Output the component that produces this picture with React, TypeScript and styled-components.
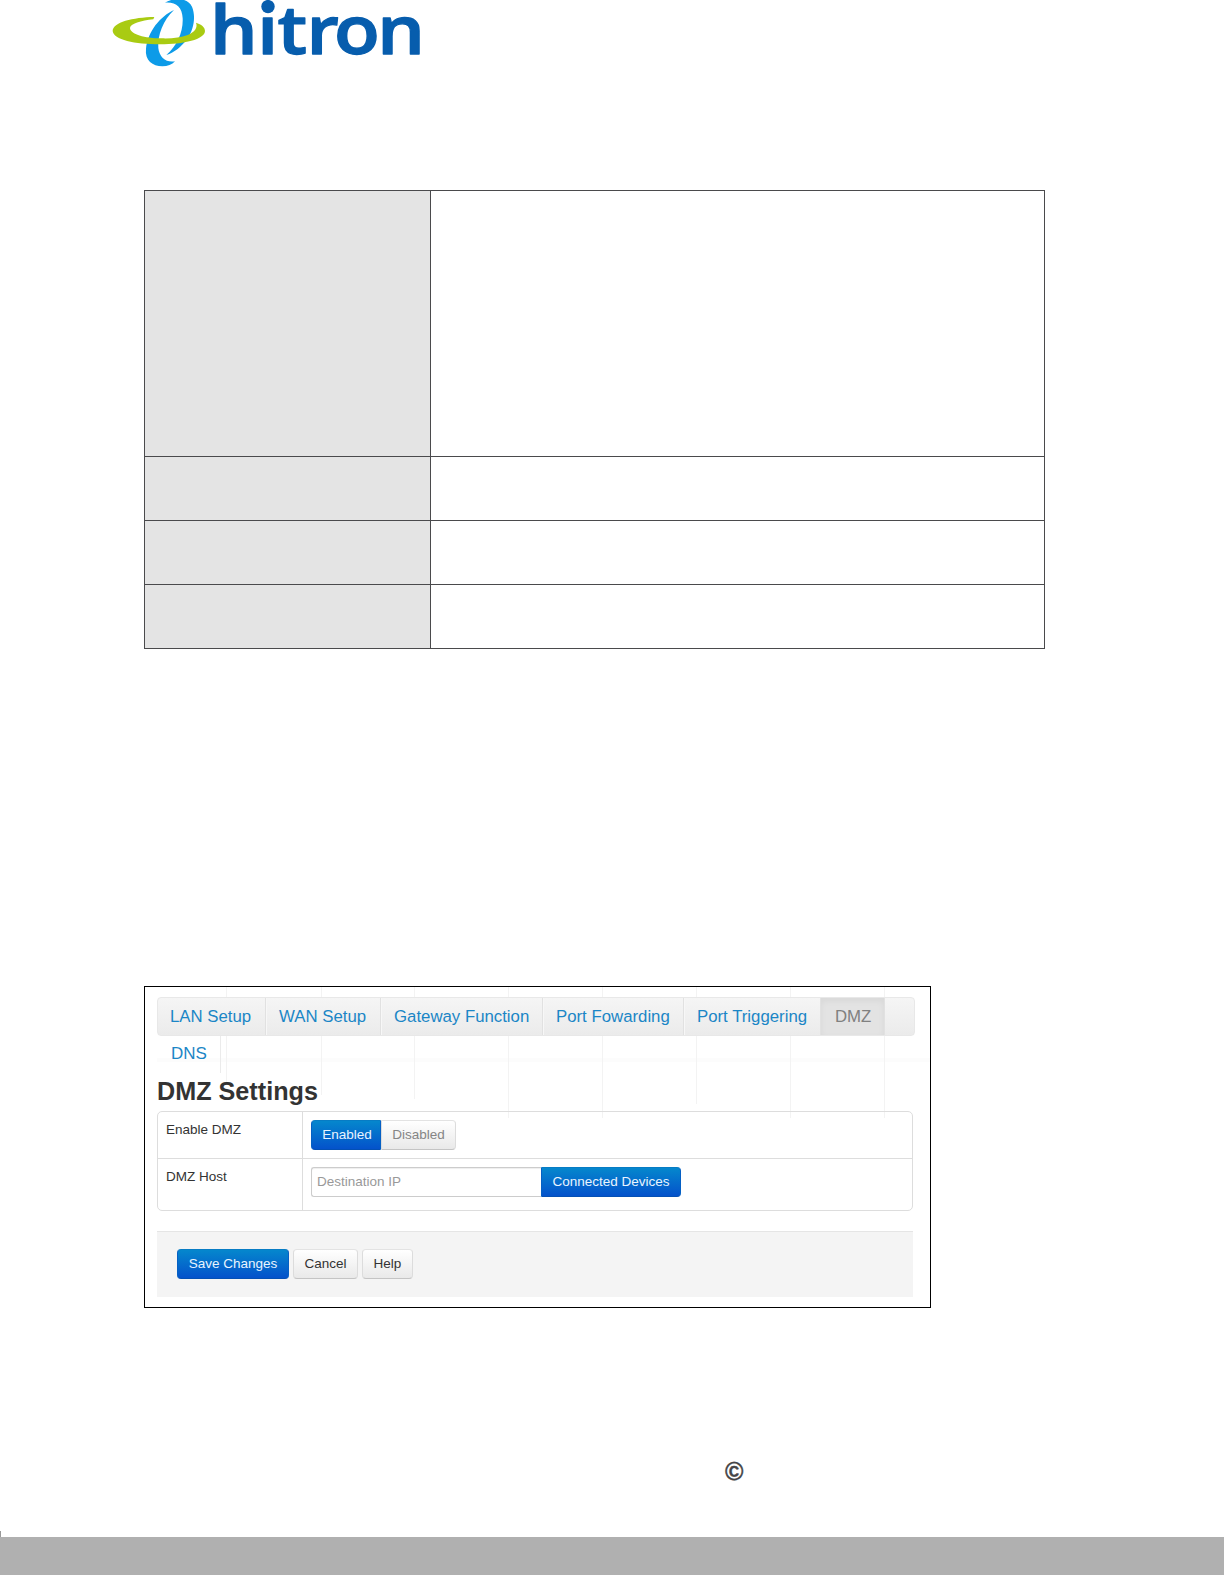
import React from "react";
import styled, { createGlobalStyle, css } from "styled-components";

const GlobalStyle = createGlobalStyle`
  body {
    margin: 0;
    background: #fff;
    font-family: "Liberation Sans", Arial, sans-serif;
  }
  * { box-sizing: border-box; }
`;

const Page = styled.div`
  display: flex;
  flex-direction: column;
  width: 1224px;
  height: 1584px;
  overflow: hidden;
  background: #fff;
`;

const Header = styled.header`
  height: 80px;
  padding-left: 100px;
`;

const LogoSvg = styled.svg`
  display: block;
  overflow: visible;
`;

const SpecTable = styled.div`
  display: grid;
  grid-template-columns: 285px 613px;
  grid-template-rows: 265px 63px 63px 63px;
  gap: 1px;
  width: 901px;
  margin: 110px 0 0 144px;
  padding: 1px;
  background: #4a4a4c;
`;

const SpecCell = styled.div<{ $shaded?: boolean }>`
  background: ${(p) => (p.$shaded ? "#e4e4e4" : "#fff")};
`;

const Panel = styled.section`
  display: flex;
  flex-direction: column;
  width: 787px;
  height: 322px;
  margin: 337px 0 0 144px;
  padding: 10px 15px 0 12px;
  border: 1px solid #000;
  background-color: #fff;
  background-image: ${[81, 176, 269, 363, 457, 551, 645, 739].map(() => "linear-gradient(#f3f3f3, #f3f3f3)").join(", ")},
    linear-gradient(#fcfcfc, #fcfcfc);
  background-size: 1px 98px, 1px 108px, 1px 112px, 1px 131px, 1px 131px, 1px 117px, 1px 131px, 1px 131px, 773px 4px;
  background-position: 81px 0, 176px 0, 269px 0, 363px 0, 457px 0, 551px 0, 645px 0, 739px 0, 12px 71px;
  background-repeat: no-repeat;
`;

const TabBar = styled.nav`
  display: flex;
  flex: none;
  width: 758px;
  height: 39px;
  border: 1px solid #e8e8e8;
  border-radius: 4px;
  background: linear-gradient(#f5f5f5, #ebebeb);
`;

const tabText = css`
  color: #1b86c6;
  font-size: 16.8px;
  line-height: 37px;
  white-space: nowrap;
`;

const Tab = styled.a<{ $width: number; $active?: boolean }>`
  ${tabText}
  width: ${(p) => p.$width}px;
  padding-left: 13px;
  border-right: 1px solid #e1e1e1;
  box-shadow: 1px 0 0 #f7f7f7;
  &:first-child {
    padding-left: 12px;
  }
  ${(p) =>
    p.$active &&
    css`
      color: #808080;
      background: #e3e3e3;
      padding-left: 14px;
      box-shadow: inset 0 3px 6px rgba(0, 0, 0, 0.05);
    `}
`;

const WrappedTab = styled.a`
  ${tabText}
  flex: none;
  width: 64px;
  height: 37px;
  padding-left: 14px;
  border-right: 1px solid #ebebeb;
  font-size: 17px;
  line-height: 36px;
`;

const Title = styled.h1`
  flex: none;
  margin: 0;
  height: 38px;
  color: #333;
  font-size: 25.2px;
  line-height: 36px;
`;

const Settings = styled.div`
  flex: none;
  width: 756px;
  border: 1px solid #ddd;
  border-radius: 5px;
`;

const SettingRow = styled.div<{ $height: number }>`
  display: grid;
  grid-template-columns: 144px 1fr;
  height: ${(p) => p.$height}px;
  & + & {
    border-top: 1px solid #ddd;
  }
`;

const SettingLabel = styled.div`
  padding: 9px 0 0 8px;
  color: #333;
  font-size: 13.5px;
  line-height: 18px;
`;

const SettingControl = styled.div`
  display: flex;
  align-items: flex-start;
  padding: 8px 0 0 8px;
  border-left: 1px solid #ddd;
`;

const Button = styled.button<{ $width: number; $primary?: boolean; $muted?: boolean; $join?: "left" | "right" }>`
  width: ${(p) => p.$width}px;
  height: 30px;
  padding: 0;
  border: 1px solid #d4d4d4;
  border-color: #e3e3e3 #dcdcdc #c4c4c4;
  border-radius: 4px;
  background: linear-gradient(#fff, #e9e9e9);
  color: ${(p) => (p.$muted ? "#858585" : "#333")};
  font: 13.5px/28px "Liberation Sans", Arial, sans-serif;
  white-space: nowrap;
  ${(p) =>
    p.$primary &&
    css`
      border-color: #077cc4 #0560c4 #0450b4;
      background: linear-gradient(#0587cd, #0452cb);
      color: #e9f4ff;
    `}
  ${(p) => p.$join === "left" && "padding-left: 2px; border-top-right-radius: 0; border-bottom-right-radius: 0;"}
  ${(p) => p.$join === "right" && "border-top-left-radius: 0; border-bottom-left-radius: 0;"}
`;

const HostInput = styled.input`
  width: 230px;
  height: 30px;
  padding: 0 5px 2px;
  border: 1px solid #ccc;
  border-right: 0;
  border-radius: 3px 0 0 3px;
  background: #fff;
  box-shadow: inset 0 1px 1px rgba(0, 0, 0, 0.07);
  font: 13.5px "Liberation Sans", Arial, sans-serif;
  &::placeholder {
    color: #999;
    opacity: 1;
  }
`;

const Actions = styled.div`
  display: flex;
  flex: none;
  gap: 4px;
  width: 756px;
  height: 66px;
  margin-top: 20px;
  padding: 17px 0 0 20px;
  border-top: 1px solid #e5e5e5;
  background: #f4f4f4;
`;

const Copyright = styled.div`
  margin: 149px 0 0 725px;
  height: 28px;
  color: #454547;
  font-size: 25px;
  font-weight: 700;
  line-height: 28px;
  -webkit-text-stroke: 0.4px #454547;
`;

const FooterTick = styled.div`
  width: 1px;
  height: 6px;
  margin-top: 46px;
  background: #999;
`;

const FooterBar = styled.footer`
  height: 38px;
  background: #b0b0b0;
`;

const tabs = [
  { label: "LAN Setup", width: 108 },
  { label: "WAN Setup", width: 115 },
  { label: "Gateway Function", width: 162 },
  { label: "Port Fowarding", width: 141 },
  { label: "Port Triggering", width: 137 },
  { label: "DMZ", width: 64, active: true },
];

function Logo() {
  return (
    <LogoSvg width="340" height="80" viewBox="0 0 340 80" aria-label="hitron">
      <g transform="scale(.3333)">
        <path
          fill="#0d9be8"
          d="M194 8C222-8 262-8 276 20C288 48 282 88 262 116C244 140 224 157 199 165C232 137 250 95 248 55C247 22 228 5 194 8Z"
        />
        <path
          fill="#0d9be8"
          d="M222 30C182 48 143 94 138 147C134 181 158 199 187 199C203 199 216 194 225 184C199 189 178 172 175 144C172 106 190 60 222 30Z"
        />
        <path
          fill="#a9cb12"
          d="M163 51C99 52 38 67 38 93C40 119 105 133 180 133C251 133 315 118 315 93C315 81 304 73 288 68C294 83 284 96 263 105C243 113 215 116 185 115C134 115 91 103 90 84C90 72 124 62 160 58Z"
        />
      </g>
      <text
        y="53.6"
        transform="scale(1.12 1)"
        fill="#075dad"
        stroke="#075dad"
        strokeWidth="1.3"
        strokeLinejoin="round"
        fontFamily="'Open Sans', sans-serif"
        fontWeight="600"
        fontSize="67"
      >
        <tspan x="98.3">h</tspan>
        <tspan x="140.4">i</tspan>
        <tspan x="158.4">t</tspan>
        <tspan x="184.4">r</tspan>
        <tspan x="208.9">o</tspan>
        <tspan x="247.6">n</tspan>
      </text>
      <circle cx="168" cy="6.6" r="6.7" fill="#075dad" />
    </LogoSvg>
  );
}

export default function App() {
  return (
    <Page>
      <GlobalStyle />
      <Header>
        <Logo />
      </Header>
      <SpecTable>
        {[0, 1, 2, 3].map((row) => (
          <React.Fragment key={row}>
            <SpecCell $shaded />
            <SpecCell />
          </React.Fragment>
        ))}
      </SpecTable>
      <Panel>
        <TabBar>
          {tabs.map((t) => (
            <Tab key={t.label} $width={t.width} $active={t.active}>
              {t.label}
            </Tab>
          ))}
        </TabBar>
        <WrappedTab>DNS</WrappedTab>
        <Title>DMZ Settings</Title>
        <Settings>
          <SettingRow $height={46}>
            <SettingLabel>Enable DMZ</SettingLabel>
            <SettingControl>
              <Button $width={70} $primary $join="left">Enabled</Button>
              <Button $width={75} $muted $join="right">Disabled</Button>
            </SettingControl>
          </SettingRow>
          <SettingRow $height={52}>
            <SettingLabel>DMZ Host</SettingLabel>
            <SettingControl>
              <HostInput placeholder="Destination IP" />
              <Button $width={140} $primary $join="right">Connected Devices</Button>
            </SettingControl>
          </SettingRow>
        </Settings>
        <Actions>
          <Button $width={112} $primary>Save Changes</Button>
          <Button $width={65}>Cancel</Button>
          <Button $width={51}>Help</Button>
        </Actions>
      </Panel>
      <Copyright>©</Copyright>
      <FooterTick />
      <FooterBar />
    </Page>
  );
}
